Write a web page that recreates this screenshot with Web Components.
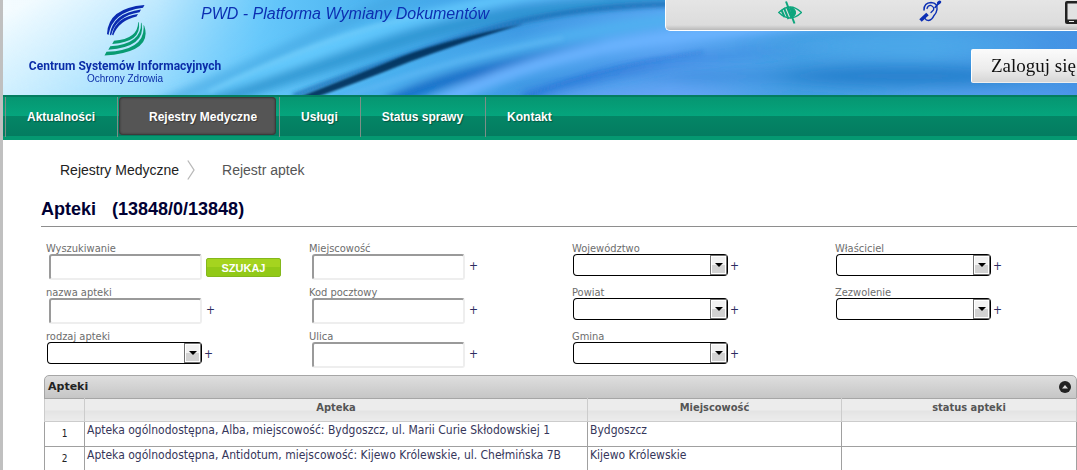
<!DOCTYPE html>
<html lang="pl">
<head>
<meta charset="utf-8">
<title>PWD - Rejestr aptek</title>
<style>
html, body { margin: 0; min-height: 100%; background: #fff; }
body { font: 12px/16px "DejaVu Sans Condensed", "DejaVu Sans", sans-serif; color: #333; overflow-x: hidden; }
</style>
</head>
<body>
<pwd-page>
  <pwd-banner slot="header"></pwd-banner>
  <pwd-nav slot="header">
    <pwd-nav-item>Aktualności</pwd-nav-item>
    <pwd-nav-item active>Rejestry Medyczne</pwd-nav-item>
    <pwd-nav-item>Usługi</pwd-nav-item>
    <pwd-nav-item>Status sprawy</pwd-nav-item>
    <pwd-nav-item>Kontakt</pwd-nav-item>
  </pwd-nav>
  <pwd-breadcrumb></pwd-breadcrumb>
  <pwd-heading count="(13848/0/13848)">Apteki</pwd-heading>
  <pwd-filters>
    <pwd-column>
      <pwd-field label="Wyszukiwanie" action="SZUKAJ"></pwd-field>
      <pwd-field label="nazwa apteki"></pwd-field>
      <pwd-field label="rodzaj apteki" kind="select"></pwd-field>
    </pwd-column>
    <pwd-column>
      <pwd-field label="Miejscowość"></pwd-field>
      <pwd-field label="Kod pocztowy"></pwd-field>
      <pwd-field label="Ulica"></pwd-field>
    </pwd-column>
    <pwd-column>
      <pwd-field label="Województwo" kind="select"></pwd-field>
      <pwd-field label="Powiat" kind="select"></pwd-field>
      <pwd-field label="Gmina" kind="select"></pwd-field>
    </pwd-column>
    <pwd-column>
      <pwd-field label="Właściciel" kind="select"></pwd-field>
      <pwd-field label="Zezwolenie" kind="select"></pwd-field>
    </pwd-column>
  </pwd-filters>
  <pwd-register></pwd-register>
</pwd-page>

<script>
const define = (name, html) => customElements.define(name, class extends HTMLElement {
  constructor() {
    super();
    this.attachShadow({ mode: 'open' });
  }
  connectedCallback() {
    this.shadowRoot.innerHTML = typeof html === 'function' ? html(this) : html;
  }
});

define('pwd-page', `
<style>
:host { display: block; min-height: 100vh; box-sizing: border-box; border-left: 3px solid #c0c0c0; background: #fff; }
main { display: block; padding: 0 0 0 38px; }
</style>
<header><slot name="header"></slot></header>
<main><slot></slot></main>`);

define('pwd-banner', `
<style>
:host { display: grid; grid-template-columns: minmax(0, 1fr) 412px; height: 95px; overflow: hidden; }
.art { grid-area: 1 / 1 / 2 / 3; width: 100%; height: 95px; display: block; }
.left { grid-area: 1 / 1; display: flex; z-index: 1; align-items: flex-start; white-space: nowrap; }
.right { grid-area: 1 / 2; z-index: 1; display: flex; flex-direction: column; align-items: flex-end; gap: 18px; }
</style>
<svg class="art" viewBox="0 0 1074 95" preserveAspectRatio="none" aria-hidden="true">
  <defs>
    <linearGradient id="base" gradientUnits="userSpaceOnUse" x1="0" y1="0" x2="1074" y2="0">
      <stop offset="0" stop-color="#b8e8ff"/><stop offset=".12" stop-color="#9adcfe"/>
      <stop offset=".24" stop-color="#66c8fb"/><stop offset=".36" stop-color="#48b0ee"/>
      <stop offset=".48" stop-color="#3f9ae4"/><stop offset=".62" stop-color="#5aa4f2"/>
      <stop offset=".74" stop-color="#449ee4"/><stop offset=".86" stop-color="#4aa4e8"/><stop offset="1" stop-color="#4592e4"/>
    </linearGradient>
    <linearGradient id="glow" gradientUnits="userSpaceOnUse" x1="30" y1="0" x2="90" y2="130">
      <stop offset="0" stop-color="#fff" stop-opacity=".85"/><stop offset=".45" stop-color="#f0faff" stop-opacity=".5"/>
      <stop offset="1" stop-color="#dff4ff" stop-opacity="0"/>
    </linearGradient>
    <linearGradient id="fade" gradientUnits="userSpaceOnUse" x1="0" y1="0" x2="280" y2="0">
      <stop offset="0" stop-color="#fff"/><stop offset=".55" stop-color="#fff" stop-opacity=".85"/><stop offset="1" stop-color="#fff" stop-opacity="0"/>
    </linearGradient>
    <linearGradient id="deep" gradientUnits="userSpaceOnUse" x1="500" y1="0" x2="840" y2="0">
      <stop offset="0" stop-color="#2672d4"/><stop offset=".4" stop-color="#2f78d8" stop-opacity=".8"/><stop offset="1" stop-color="#3c88e0" stop-opacity="0"/>
    </linearGradient>
    <mask id="m"><rect width="300" height="95" fill="url(#fade)"/></mask>
    <filter id="b1" x="-20%" y="-40%" width="140%" height="180%"><feGaussianBlur stdDeviation="1"/></filter>
    <filter id="b2" x="-20%" y="-40%" width="140%" height="180%"><feGaussianBlur stdDeviation="2"/></filter>
    <filter id="b5" x="-20%" y="-60%" width="140%" height="220%"><feGaussianBlur stdDeviation="5"/></filter>
    <filter id="b9" x="-40%" y="-200%" width="180%" height="500%"><feGaussianBlur stdDeviation="24 7"/></filter>
  </defs>
  <rect width="1074" height="95" fill="url(#base)"/>
  <g fill="none" filter="url(#b5)">
    <path d="M130 116Q250 66 360 14T520 -16" stroke="#45a8e2" stroke-width="10" opacity=".8"/>
    <path d="M190 104Q310 48 410 20T600 -12" stroke="#66ccff" stroke-width="10"/>
    <path d="M180 112Q300 72 400 40T740 -10" stroke="#2f93cf" stroke-width="13" opacity=".9"/>
    <path d="M310 114Q400 74 530 44T780 12" stroke="#50b0f0" stroke-width="13"/>
    <path d="M384 104Q430 80 500 66T600 48" stroke="#0a68c4" stroke-width="14" opacity=".9"/>
    <path d="M520 98Q620 66 700 58T840 46" stroke="url(#deep)" stroke-width="12" opacity=".8"/>
    <path d="M430 106Q540 50 680 36T900 10" stroke="#6cb4ff" stroke-width="13"/>
  </g>
  <g filter="url(#b9)">
    <ellipse cx="900" cy="76" rx="130" ry="11" fill="#257dcb" opacity=".9"/>
    <ellipse cx="700" cy="76" rx="70" ry="5" fill="#3580d6" opacity=".7"/>
    <ellipse cx="900" cy="46" rx="120" ry="7" fill="#4eaaea" opacity=".8"/>
    <ellipse cx="640" cy="98" rx="100" ry="7" fill="#6aa4f6"/>
    <ellipse cx="1000" cy="99" rx="110" ry="5" fill="#5a9cf2"/>
  </g>
  <g fill="none" filter="url(#b2)">
    <path d="M290 96Q390 58 480 31T690 4T860 -6" stroke="#1d69b2" stroke-width="5" opacity=".8"/>
    <path d="M206 92Q320 36 420 14" stroke="#8bdcff" stroke-width="3" opacity=".5"/>
    <path d="M340 98Q440 60 560 38" stroke="#6cc0fa" stroke-width="3" opacity=".5"/>
    <path d="M520 98Q590 68 700 52" stroke="#1f6ad0" stroke-width="2" opacity=".5"/>
  </g>
  <path d="M296 97Q350 76 400 56Q450 38 520 24Q460 42 406 62Q356 82 314 97Z" fill="#062f58" opacity=".9" filter="url(#b1)"/>
  <rect width="300" height="95" fill="url(#glow)" mask="url(#m)"/>
</svg>
<div class="left"><pwd-logo></pwd-logo><pwd-title></pwd-title></div>
<div class="right"><pwd-tools></pwd-tools><pwd-login></pwd-login></div>`);

define('pwd-logo', `
<style>
:host { display: flex; flex-direction: column; align-items: center; flex: 0 0 196px; margin-left: 24px; color: #0b2da8; font-family: "Liberation Sans", Arial, sans-serif; }
svg { width: 44px; height: 54px; margin-top: 4px; display: block; }
b { font: bold 12px/16px Roboto, "Liberation Sans", sans-serif; }
small { font-size: 10px; line-height: 10px; }
</style>
<svg viewBox="103 4 44 54" aria-hidden="true">
  <g fill="#0b2bb0">
    <path d="M144.500 5Q108 8 107 34L108.500 35Q112 12 143 7.800Z"/>
    <path d="M141 9.500Q113 13 109.800 34.500L111 35.500Q116 16 139.500 12.300Z"/>
    <path d="M138 14Q116 17 112 34.500L113.200 35.500Q119 20.500 136.500 16.600Z"/>
  </g>
  <g fill="#089b72">
    <path d="M144.300 26Q153 52 104.500 55.600L106.500 51.800Q146 50 143.500 25Z"/>
    <path d="M141.700 23.500Q146 47 108.300 49.700L110.300 46.300Q142 44 141 22.500Z"/>
    <path d="M138.800 22.500Q142 42 112.200 43.900L114 40.800Q138 39 138.200 22Z"/>
  </g>
</svg>
<b>Centrum Systemów Informacyjnych</b>
<small>Ochrony Zdrowia</small>`);

define('pwd-title', `
<style>
:host { display: block; margin-top: 2px; margin-left: -22px; color: #0c2fb2; font: italic 16px/24px "Liberation Sans", Arial, sans-serif; }
</style>PWD - Platforma Wymiany Dokumentów`);

define('pwd-tools', `
<style>
:host { display: flex; justify-content: space-between; box-sizing: border-box; width: 100%; height: 31px; padding: 0 0 0 112px;
  overflow: hidden; border: 1px solid #fff; border-width: 0 0 1px 1px; border-radius: 0 0 0 5px;
  background: linear-gradient(#e5e5e5 0, #dcdcdc 25px, #b9b9b9 30px); }
a { display: block; height: 26px; }
svg { display: block; }
a:nth-of-type(2) { margin-right: 8px; }
</style>
<a href="#kontrast" aria-label="Kontrast"><svg width="24" height="25" viewBox="778 0 24 25" fill="none" stroke="#0da57d">
  <path d="M778.800 12.500Q790 1.500 801.500 12.500Q790 23.500 778.800 12.500Z" stroke-width="1.300"/>
  <path d="M790 7.500a5 5 0 0 1 2 10z" fill="#0da57d" stroke="none"/>
  <path d="M786 1.500l8.500 22" stroke-width="2"/><path d="M787 7l4.500 11M784 8l4.500 11M781.500 10l3 7M790 7l3.500 9" stroke-width="2"/>
</svg></a>
<a href="#migowy" aria-label="Niesłyszący"><svg width="24" height="24" viewBox="909 0 24 24" fill="none" stroke="#0c2fb4" stroke-linecap="round">
  <path d="M915 10Q915 3 922 2.600Q929 3 928 9.500Q927.500 13 925 15.500Q923 20 919.500 20.500Q917 20.500 916 18.500" stroke-width="1.500"/>
  <path d="M918 8.500Q919 5 922 5.500Q925.500 7 924.500 10L922 12.500" stroke-width="1.300"/>
  <path d="M911.500 20.500L918.500 14" stroke-width="3.600" stroke-linecap="butt"/><path d="M926 7.500L930 3" stroke-width="1.600"/><path d="M929.500 3l1.200-1" stroke-width="3"/>
</svg></a>
<a href="#mobilna" aria-label="Wersja mobilna"><svg width="12" height="24" viewBox="1065 0 12 24">
  <path d="M1067 1h11v23h-11q-2 0-2-2V3q0-2 2-2z" fill="#222"/><path d="M1067.500 3.500h10v16h-10z" fill="#e2e2e2"/><path d="M1069 21h5v1h-5z" fill="#eee"/>
</svg></a>`);

define('pwd-login', `
<style>
:host { display: block; width: 106px; }
button { width: 100%; height: 34px; padding: 0 0 0 19px; border: 0; border-left: 1px solid #fff; border-bottom: 1px solid #eee; border-radius: 2px 0 0 2px;
  background: linear-gradient(#fbfbfb, #ececec 60%, #d6d6d6); color: #111; text-align: left; white-space: nowrap; font: 19px/32px "Liberation Serif", serif; }
</style><button type="button">Zaloguj się</button>`);

define('pwd-nav', `
<style>
:host { display: block; height: 45px; box-sizing: border-box; border-top: 2px solid #047d60; border-bottom: 4px solid #059871;
  background: linear-gradient(#069671 0, #05a57d 19px, #048666 19px, #047c60 39px); }
nav { display: flex; height: 40px; padding-left: 2px; }
</style><nav><slot></slot></nav>`);

define('pwd-nav-item', `
<style>
:host { display: block; border-left: 1px solid #7d8f88; }
a { display: block; box-sizing: border-box; height: 38px; padding: 0 22px 0 21px; color: #fff; text-decoration: none; white-space: nowrap; text-shadow: 1px 1px 1px rgba(0,0,0,.35);
  font: bold 12px/40px "Liberation Sans", Arial, sans-serif; }
:host([active]) a { margin: 0 3px 0 1px; padding: 0 19px 0 30px; background: #555; border-radius: 4px; box-shadow: inset 0 0 2px 1px #333; }
</style><a href="#"><slot></slot></a>`);

define('pwd-breadcrumb', `
<style>
:host { display: block; padding: 20px 0 0 19px; font: 14px/20px "Liberation Sans", Arial, sans-serif; }
nav { display: flex; }
a { color: #222; text-decoration: none; }
svg { margin: 0 27px 0 8px; display: block; }
span { color: #555; }
</style>
<nav><a href="#rejestry">Rejestry Medyczne</a>
<svg width="8" height="20" viewBox="0 0 8 20" fill="none" stroke="#b8b8b8" stroke-width="1.300" aria-hidden="true"><path d="M.8.500L7 10 .8 19.500"/></svg>
<span>Rejestr aptek</span></nav>`);

define('pwd-heading', host => `
<style>
:host { display: block; border-bottom: 1px solid #8e8e8e; padding: 17px 0 5px; }
h1 { display: flex; gap: 16px; margin: 0; color: #000033; font: bold 18px/24px "Liberation Sans", Arial, sans-serif; }
</style><h1><slot></slot><span>${host.getAttribute('count')}</span></h1>`);

define('pwd-filters', `
<style>:host { display: grid; grid-template-columns: repeat(4, 263px); padding: 14px 0 0 5px; }</style><slot></slot>`);

define('pwd-column', `
<style>:host { display: flex; flex-direction: column; }</style><slot></slot>`);

define('pwd-field', host => {
  const select = host.getAttribute('kind') === 'select';
  const action = host.getAttribute('action');
  return `
<style>
:host { display: block; height: 44px; }
label { display: block; height: 13px; color: #6d6d6d; font-size: 11px; line-height: 16px; }
.row { display: flex; gap: 4px; padding-left: 3px; align-items: flex-start; }
.row.pick { gap: 2px; padding-left: 1px; }
input { box-sizing: border-box; width: 153px; height: 26px; border: 2px solid; border-color: #9a9a9a #eee #eee #9a9a9a; border-radius: 3px; background: #fff; }
.combo { display: grid; width: 155px; height: 22px; }
select { grid-area: 1 / 1; appearance: none; width: 155px; height: 22px; margin: 0; border: 1px solid #000; border-right-width: 2px; border-radius: 4px; background: #fff; }
.arrow { grid-area: 1 / 1; place-self: center end; box-sizing: border-box; width: 17px; height: 20px; margin-right: 1px; border: 1px solid #707070; pointer-events: none;
  box-shadow: inset 0 0 0 1px #fff; background: linear-gradient(#f2f2f2 50%, #d2d2d2 50%); display: grid; place-items: center; }
.arrow::before { content: ""; border: 4px solid transparent; border-top-color: #000; border-bottom: 0; }
a { color: #2c2c62; text-decoration: none; font-size: 12px; line-height: 24px; }
button { width: 75px; height: 19px; margin: 4px 0 0; padding: 0; border: 1px solid #84b81c; border-radius: 2px; color: #fff;
  background: linear-gradient(#a5d41f 50%, #92c917 50%); font: bold 11px/16px "Liberation Sans", Arial, sans-serif; }
</style>
<label for="field">${host.getAttribute('label')}</label>
<div class="row${select ? ' pick' : ''}">
${select ? '<div class="combo"><select id="field"></select><span class="arrow"></span></div>' : '<input id="field" type="text">'}
${action ? `<button type="button">${action}</button>` : '<a href="#dodaj">+</a>'}
</div>`;
});

define('pwd-register', `
<style>
:host { display: block; margin: 2px 0 0 3px; }
header { display: flex; align-items: center; justify-content: space-between; box-sizing: border-box; height: 24px; padding: 0 5px 0 3px;
  border: 1px solid #a6a6a6; border-radius: 5px 5px 0 0; background: linear-gradient(#dedede, #c6c6c6); }
h2 { margin: 0; color: #222; font: bold 11px/22px "DejaVu Sans", Verdana, sans-serif; }
button { width: 12px; height: 12px; padding: 0; border: 0; background: none; }
svg { display: block; }
table { width: 100%; table-layout: fixed; border-collapse: collapse; margin-top: -1px; }
th, td { box-sizing: border-box; border: 1px solid #a0a0a0; }
th { height: 23px; padding: 1px 0 5px; border-color: #a6a6a6 #ccc #ccc; color: #555; font-size: 11px; line-height: 16px; background: linear-gradient(#ececec 50%, #e3e3e3 50%, #ededed); }
th:last-child { padding-left: 20px; }
td { height: 25px; padding: 0 2px 8px; vertical-align: top; color: #36365a; font-size: 12px; line-height: 16px; white-space: nowrap; }
td:first-child { padding: 0; vertical-align: middle; text-align: center; color: #222; font-size: 10px; }
.n { width: 40px; } .a { width: 503px; } .m { width: 254px; }
</style>
<header><h2>Apteki</h2><button type="button" aria-label="Zwiń"><svg width="12" height="12" viewBox="0 0 12 12"><circle cx="6" cy="6" r="6" fill="#222"/><path d="M3 7.500h6l-3-3.500z" fill="#ddd"/></svg></button></header>
<table>
<colgroup><col class="n"><col class="a"><col class="m"><col></colgroup>
<thead><tr><th></th><th>Apteka</th><th>Miejscowość</th><th>status apteki</th></tr></thead>
<tbody>
<tr><td>1</td><td>Apteka ogólnodostępna, Alba, miejscowość: Bydgoszcz, ul. Marii Curie Skłodowskiej 1</td><td>Bydgoszcz</td><td></td></tr>
<tr><td>2</td><td>Apteka ogólnodostępna, Antidotum, miejscowość: Kijewo Królewskie, ul. Chełmińska 7B</td><td>Kijewo Królewskie</td><td></td></tr>
</tbody></table>`);
</script>
</body>
</html>
